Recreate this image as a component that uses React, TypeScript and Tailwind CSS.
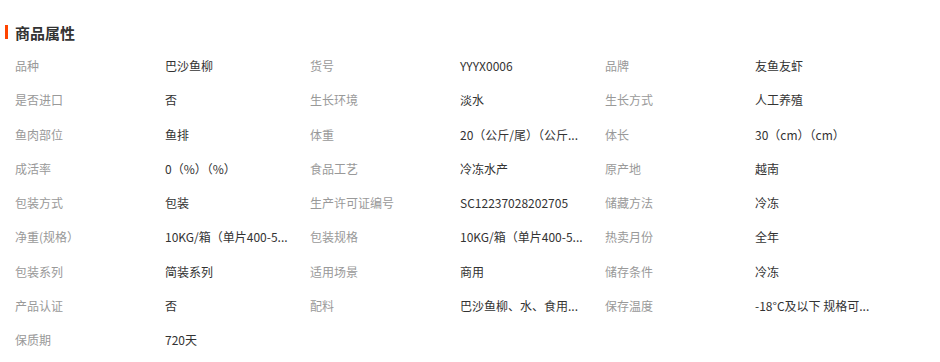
import React from 'react';

const attrs: [string, string][] = [
  ['品种', '巴沙鱼柳'],
  ['货号', 'YYYX0006'],
  ['品牌', '友鱼友虾'],
  ['是否进口', '否'],
  ['生长环境', '淡水'],
  ['生长方式', '人工养殖'],
  ['鱼肉部位', '鱼排'],
  ['体重', '20（公斤/尾）（公斤...'],
  ['体长', '30（cm）（cm）'],
  ['成活率', '0（%）（%）'],
  ['食品工艺', '冷冻水产'],
  ['原产地', '越南'],
  ['包装方式', '包装'],
  ['生产许可证编号', 'SC12237028202705'],
  ['储藏方法', '冷冻'],
  ['净重(规格）', '10KG/箱（单片400-5...'],
  ['包装规格', '10KG/箱（单片400-5...'],
  ['热卖月份', '全年'],
  ['包装系列', '简装系列'],
  ['适用场景', '商用'],
  ['储存条件', '冷冻'],
  ['产品认证', '否'],
  ['配料', '巴沙鱼柳、水、食用...'],
  ['保存温度', '-18°C及以下 规格可...'],
  ['保质期', '720天'],
];

const App: React.FC = () => {
  return (
    <div
      className="w-[940px] h-[362px] bg-white overflow-hidden"
      style={{ fontFamily: '"Microsoft YaHei", "Noto Sans CJK SC", sans-serif' }}
    >
      {/* Title */}
      <div className="flex items-center h-[16px] mt-[24px] pl-[5px]">
        <div className="w-[3px] h-[14px] bg-[#ff4400]" />
        <h2 className="ml-[7px] text-[15px] font-bold text-[#333] leading-none">商品属性</h2>
      </div>

      {/* Attribute grid */}
      <div className="mt-[9px] pl-[15px] grid grid-cols-[150px_145px_150px_145px_150px_1fr]">
        {attrs.map(([label, value]) => (
          <React.Fragment key={label}>
            <div className="h-[34.25px] flex items-center text-[12px] text-[#999] whitespace-nowrap">
              {label}
            </div>
            <div className="h-[34.25px] flex items-center text-[12px] text-[#333] whitespace-nowrap">
              {value}
            </div>
          </React.Fragment>
        ))}
      </div>
    </div>
  );
};

export default App;
